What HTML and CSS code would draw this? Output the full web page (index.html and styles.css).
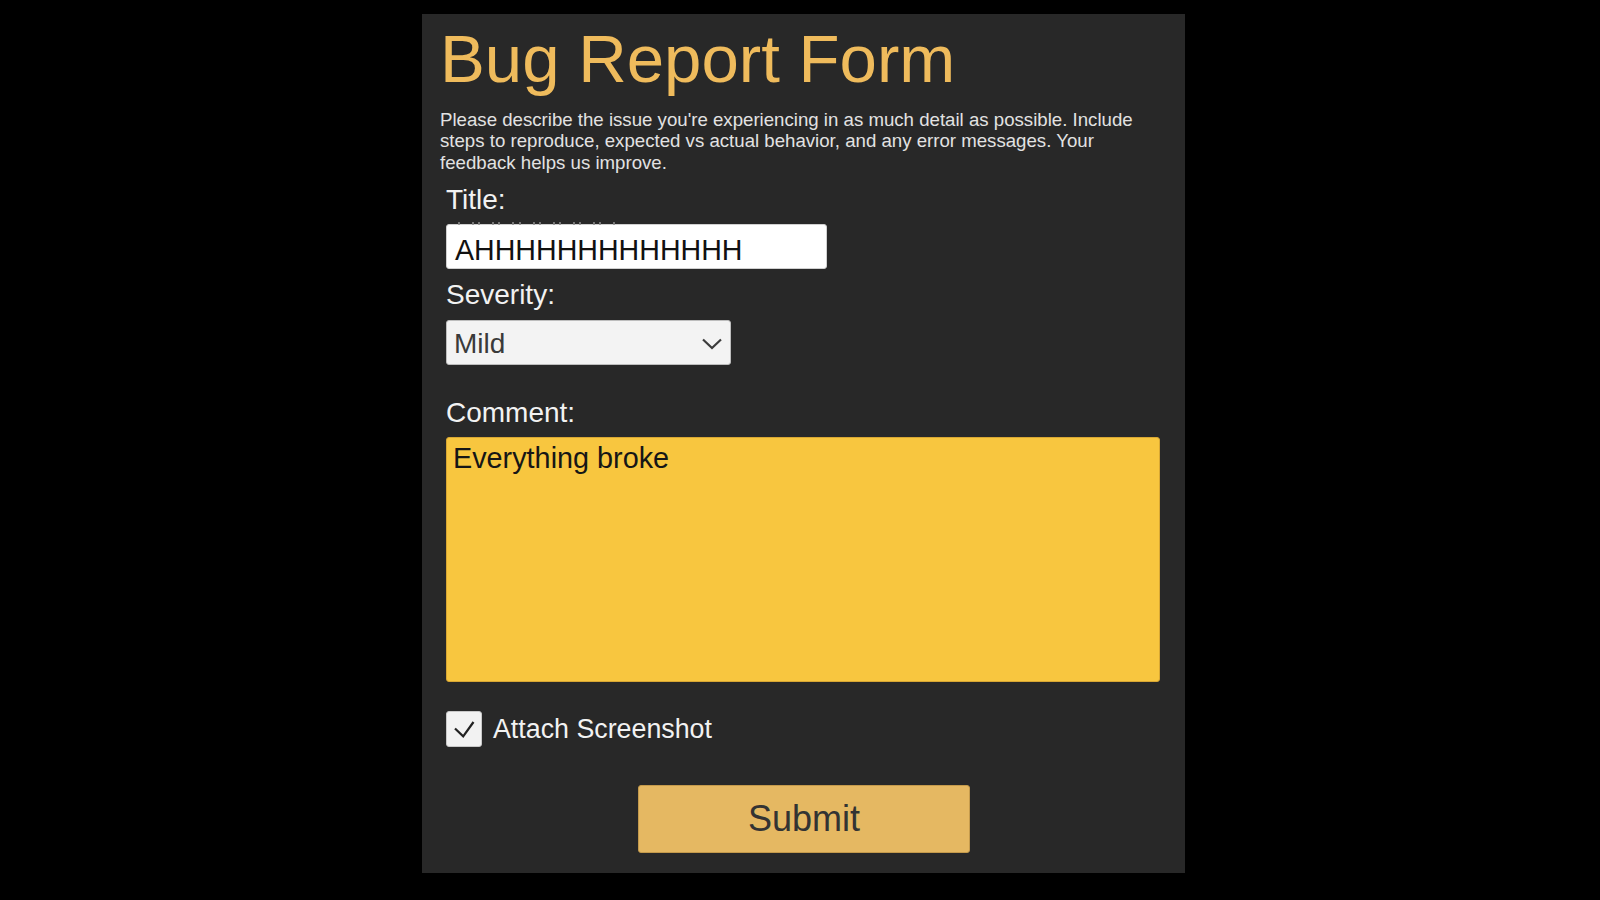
FILE: index.html
```html
<!DOCTYPE html>
<html lang="en">
<head>
<meta charset="utf-8">
<title>Bug Report Form</title>
<link rel="stylesheet" href="styles.css">
</head>
<body>
<main class="panel">
  <h1 class="heading">Bug Report Form</h1>
  <p class="intro">Please describe the issue you're experiencing in as much detail as possible. Include steps to reproduce, expected vs actual behavior, and any error messages. Your feedback helps us improve.</p>
  <form class="form">
    <div class="label label-title">Title:</div>
    <div class="field text-field"><span class="field-text">AHHHHHHHHHHHHH</span></div>
    <div class="label label-severity">Severity:</div>
    <div class="field select-field">
      <span class="field-text">Mild</span>
      <svg class="chevron" width="20" height="12" viewBox="0 0 20 12"><path d="M1 1.5 L10 10 L19 1.5" fill="none" stroke="#3c3c3c" stroke-width="2.2"/></svg>
    </div>
    <div class="label label-comment">Comment:</div>
    <div class="field comment-field"><span class="field-text">Everything broke</span></div>
    <div class="check-row">
      <span class="checkbox">
        <svg width="36" height="36" viewBox="0 0 36 36"><path d="M9 17.5 L17.2 25.3 L27.5 11" fill="none" stroke="#222" stroke-width="2.2"/></svg>
      </span>
      <span class="check-label">Attach Screenshot</span>
    </div>
    <div class="submit"><span class="submit-text">Submit</span></div>
  </form>
</main>
</body>
</html>
```
FILE: styles.css
```css
html, body {
  margin: 0;
  padding: 0;
  background: #000;
}
body {
  font-family: "Liberation Sans", Arial, sans-serif;
  width: 1600px;
  height: 900px;
  overflow: hidden;
}
.panel {
  box-sizing: border-box;
  margin: 14px 0 0 422px;
  width: 763px;
  height: 859px;
  background: #282828;
  padding: 7px 18px 0 18px;
  display: flex;
  flex-direction: column;
}
.heading {
  margin: 0;
  font-size: 67.2px;
  line-height: 76px;
  font-weight: normal;
  color: #efbb5c;
}
.intro {
  margin: 12px 0 0 0;
  font-size: 18.65px;
  line-height: 21.4px;
  color: #e2e2e2;
}
.form {
  margin: 0 0 0 6px;
  display: flex;
  flex-direction: column;
  align-items: flex-start;
}
.label {
  font-size: 28px;
  line-height: 32px;
  color: #f2f2f2;
}
.label-title { margin-top: 11px; }
.label-severity { margin-top: 10px; }
.label-comment { margin-top: 32px; }
.field {
  box-sizing: border-box;
  position: relative;
  margin-top: 8px;
  border-radius: 3px;
  font-size: 28.6px;
  line-height: 32px;
}
.text-field {
  width: 381px;
  height: 45px;
  background: #fff;
  border: 1px solid #d0d0d0;
  padding: 9px 8px 0 8px;
  color: #111;
}
.text-field::before {
  content: "";
  position: absolute;
  left: 9px;
  top: -3px;
  width: 162px;
  height: 3px;
  background: repeating-linear-gradient(90deg, transparent 0 2px, #8a8a8a 2px 4px, transparent 4px 16px, #8a8a8a 16px 18px, transparent 18px 20.2px);
  opacity: 0.8;
}
.select-field {
  margin-top: 9px;
  width: 285px;
  height: 45px;
  background: #f3f3f3;
  border: 1px solid #bdbdbd;
  padding: 7px 7px 0 7px;
  color: #3a3a3a;
  font-size: 28px;
}
.chevron {
  position: absolute;
  left: 255px;
  top: 17px;
}
.comment-field {
  width: 714px;
  height: 245px;
  background: #f8c63f;
  border: 1px solid #d8a733;
  padding: 4px 6px 0 6px;
  color: #161616;
  font-size: 28.8px;
}
.check-row {
  margin-top: 29px;
  height: 36px;
  display: flex;
  align-items: center;
  gap: 11px;
}
.checkbox {
  box-sizing: border-box;
  width: 36px;
  height: 36px;
  background: #f2f2f2;
  border: 1px solid #c8c8c8;
  border-radius: 3px;
  display: block;
  position: relative;
}
.checkbox svg {
  position: absolute;
  left: -1px;
  top: -1px;
}
.check-label {
  font-size: 26.8px;
  line-height: 32px;
  color: #f2f2f2;
}
.submit {
  box-sizing: border-box;
  margin: 38px 0 0 192px;
  width: 332px;
  height: 68px;
  background: #e5b862;
  border: 1px solid #c49a4c;
  border-radius: 3px;
  display: flex;
  justify-content: center;
  align-items: center;
}
.submit-text {
  font-size: 36px;
  line-height: 66px;
  color: #333;
}
```
